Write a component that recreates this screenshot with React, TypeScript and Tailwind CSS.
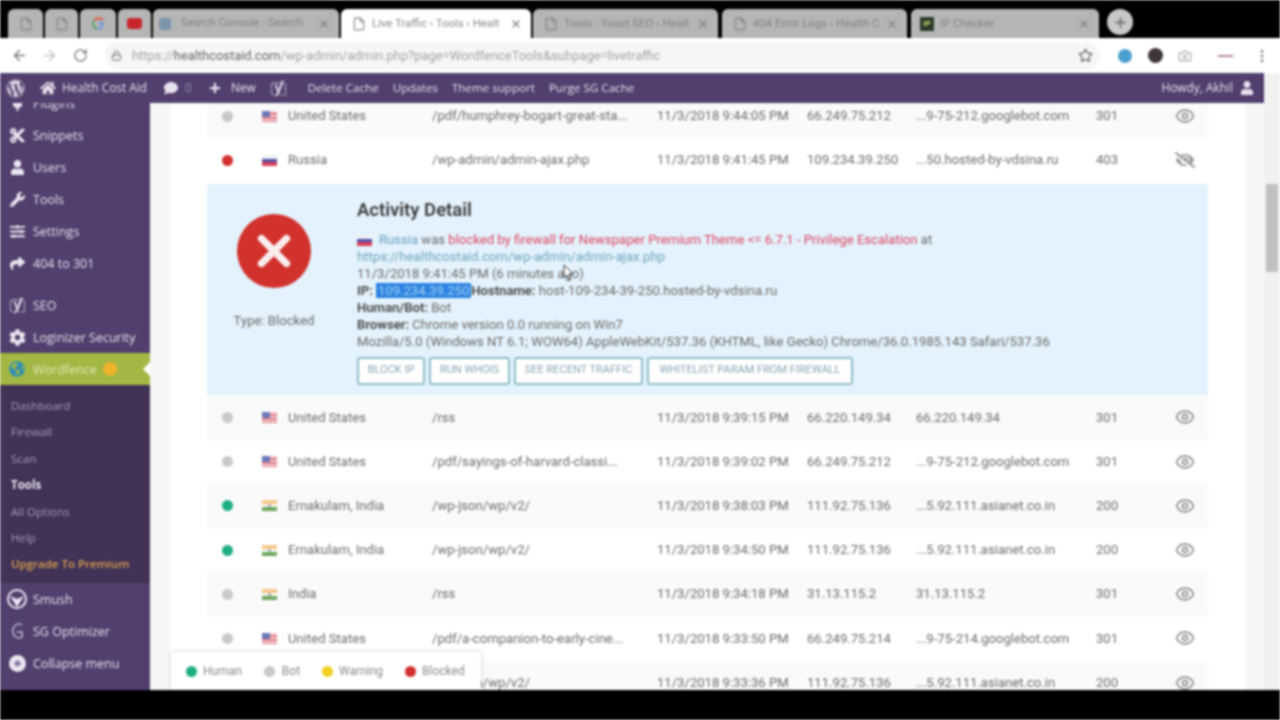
import { Lock, ArrowLeft, ArrowRight, RotateCw, Star, Camera, Eye, File, X, Plus, MoreVertical } from "lucide-react";
import { FaWordpress, FaHome, FaComment, FaPlus, FaUser, FaCut, FaWrench, FaSlidersH, FaShare, FaYoast, FaCog, FaGlobeAmericas, FaEyeSlash, FaPlug } from "react-icons/fa";

function UsFlag() {
  return (
    <svg width="15" height="11" viewBox="0 0 15 11" className="shrink-0">
      <rect width="15" height="11" fill="#f3c9cf" />
      <rect y="2" width="15" height="2" fill="#e0808c" />
      <rect y="6" width="15" height="2" fill="#e0808c" />
      <rect y="10" width="15" height="1" fill="#e0808c" />
      <rect width="8" height="6" fill="#6d78b8" />
    </svg>
  );
}

function InFlag() {
  return (
    <svg width="15" height="11" viewBox="0 0 15 11" className="shrink-0">
      <rect width="15" height="4" fill="#f5c98a" />
      <rect y="4" width="15" height="3" fill="#f7f7f0" />
      <rect y="7" width="15" height="4" fill="#6fa85f" />
      <circle cx="7.5" cy="5.5" r="1.2" fill="#7b82b0" />
    </svg>
  );
}

function RuFlag() {
  return (
    <svg width="15" height="11" viewBox="0 0 15 11" className="shrink-0">
      <rect width="15" height="4" fill="#eef0f5" />
      <rect y="4" width="15" height="3" fill="#4b55a8" />
      <rect y="7" width="15" height="4" fill="#d8405a" />
    </svg>
  );
}

const rowsTop = [
  { dot: "bg-[#c9c9c9]", flag: "us", loc: "United States", url: "/pdf/humphrey-bogart-great-sta...", time: "11/3/2018 9:44:05 PM", ip: "66.249.75.212", host: "...9-75-212.googlebot.com", code: "301" },
  { dot: "bg-[#d32f2f]", flag: "ru", loc: "Russia", url: "/wp-admin/admin-ajax.php", time: "11/3/2018 9:41:45 PM", ip: "109.234.39.250", host: "...50.hosted-by-vdsina.ru", code: "403", off: true },
];

const rowsBottom = [
  { dot: "bg-[#c9c9c9]", flag: "us", loc: "United States", url: "/rss", time: "11/3/2018 9:39:15 PM", ip: "66.220.149.34", host: "66.220.149.34", code: "301" },
  { dot: "bg-[#c9c9c9]", flag: "us", loc: "United States", url: "/pdf/sayings-of-harvard-classi...", time: "11/3/2018 9:39:02 PM", ip: "66.249.75.212", host: "...9-75-212.googlebot.com", code: "301" },
  { dot: "bg-[#1fae84]", flag: "in", loc: "Ernakulam, India", url: "/wp-json/wp/v2/", time: "11/3/2018 9:38:03 PM", ip: "111.92.75.136", host: "...5.92.111.asianet.co.in", code: "200" },
  { dot: "bg-[#1fae84]", flag: "in", loc: "Ernakulam, India", url: "/wp-json/wp/v2/", time: "11/3/2018 9:34:50 PM", ip: "111.92.75.136", host: "...5.92.111.asianet.co.in", code: "200" },
  { dot: "bg-[#c9c9c9]", flag: "in", loc: "India", url: "/rss", time: "11/3/2018 9:34:18 PM", ip: "31.13.115.2", host: "31.13.115.2", code: "301" },
  { dot: "bg-[#c9c9c9]", flag: "us", loc: "United States", url: "/pdf/a-companion-to-early-cine...", time: "11/3/2018 9:33:50 PM", ip: "66.249.75.214", host: "...9-75-214.googlebot.com", code: "301" },
  { dot: "bg-[#1fae84]", flag: "in", loc: "Ernakulam, India", url: "/wp-json/wp/v2/", time: "11/3/2018 9:33:36 PM", ip: "111.92.75.136", host: "...5.92.111.asianet.co.in", code: "200" },
];

type Row = (typeof rowsTop)[number] & { off?: boolean };

function TrafficRow({ row, alt }: { row: Row; alt: boolean }) {
  return (
    <div className={`grid h-[44.2px] shrink-0 grid-cols-[55px_26px_144px_225px_150px_109px_180px_112px] items-center text-[13.1px] text-[#6d6d6d] ${alt ? "bg-[#fafafa]" : "bg-white"}`}>
      <span className={`ml-[15px] size-[11px] rounded-full ${row.dot}`} />
      {row.flag === "us" ? <UsFlag /> : row.flag === "ru" ? <RuFlag /> : <InFlag />}
      <span className="whitespace-nowrap">{row.loc}</span>
      <span className="whitespace-nowrap">{row.url}</span>
      <span className="whitespace-nowrap">{row.time}</span>
      <span>{row.ip}</span>
      <span className="whitespace-nowrap">{row.host}</span>
      <div className="flex items-center">
        <span className="w-[79px]">{row.code}</span>
        {row.off ? <FaEyeSlash size={20} className="text-[#999]" /> : <Eye size={20} className="text-[#8b8b8b]" />}
      </div>
    </div>
  );
}

function ActivityDetail() {
  return (
    <div className="mt-[2px] flex h-[211px] shrink-0 bg-[#e3f2fc] text-[13.1px] leading-[16.9px] text-[#6b6b6b]">
      <div className="flex w-[150px] flex-col items-center pt-[30px] pr-[16px]">
        <div className="flex size-[74px] items-center justify-center rounded-full bg-[#d2322d]">
          <X size={50} strokeWidth={3.5} className="text-[#fbeeee]" />
        </div>
        <span className="mt-[25px]">Type: Blocked</span>
      </div>
      <div className="flex flex-col pt-[14px]">
        <h2 className="mb-[10px] text-[18.5px] leading-[24px] font-semibold text-[#3d3d3d]">Activity Detail</h2>
        <div className="flex items-center gap-[7px]">
          <RuFlag />
          <span className="whitespace-nowrap">
            <span className="text-[#6a9fc4]">Russia</span> was <span className="text-[#e0455f]">blocked by firewall for Newspaper Premium Theme &lt;= 6.7.1 - Privilege Escalation</span> at
          </span>
        </div>
        <span className="text-[#6fa5bd]">https://healthcostaid.com/wp-admin/admin-ajax.php</span>
        <span>11/3/2018 9:41:45 PM (6 minutes ago)</span>
        <span className="whitespace-nowrap">
          <b className="font-semibold text-[#444]">IP:</b> <span className="bg-[#2a83e0] px-[2px] text-[#a9d0f5]">109.234.39.250</span>
          <b className="font-semibold text-[#444]">Hostname:</b> host-109-234-39-250.hosted-by-vdsina.ru
        </span>
        <span>
          <b className="font-semibold text-[#444]">Human/Bot:</b> Bot
        </span>
        <span>
          <b className="font-semibold text-[#444]">Browser:</b> Chrome version 0.0 running on Win7
        </span>
        <span className="whitespace-nowrap">Mozilla/5.0 (Windows NT 6.1; WOW64) AppleWebKit/537.36 (KHTML, like Gecko) Chrome/36.0.1985.143 Safari/537.36</span>
        <div className="mt-[6px] flex gap-[4px]">
          {[
            ["BLOCK IP", "w-[68px]"],
            ["RUN WHOIS", "w-[81px]"],
            ["SEE RECENT TRAFFIC", "w-[129px]"],
            ["WHITELIST PARAM FROM FIREWALL", "w-[206px]"],
          ].map(([label, w]) => (
            <button key={label} className={`h-[28px] rounded-[3px] border-2 border-[#8fbcc6] bg-white text-[11px] whitespace-nowrap text-[#8aa5b0] ${w}`}>
              {label}
            </button>
          ))}
        </div>
      </div>
    </div>
  );
}

function NavItem({ icon, label, className = "" }: { icon: React.ReactNode; label: string; className?: string }) {
  return (
    <div className={`flex h-[32px] shrink-0 items-center text-[12.5px] text-[#e6e1ee] ${className}`}>
      <span className="flex w-[33px] justify-center pl-[1px] text-[#ebe7f2]">{icon}</span>
      <span className="mt-[2px] whitespace-nowrap">{label}</span>
    </div>
  );
}

function Sidebar() {
  return (
    <aside className="relative flex w-[150px] shrink-0 flex-col overflow-hidden bg-[#523f6d]">
      <NavItem icon={<FaPlug size={15} />} label="Plugins" className="-mt-[16px]" />
      <NavItem icon={<FaCut size={17} />} label="Snippets" />
      <NavItem icon={<FaUser size={15} />} label="Users" />
      <NavItem icon={<FaWrench size={15} />} label="Tools" />
      <NavItem icon={<FaSlidersH size={15} />} label="Settings" />
      <NavItem icon={<FaShare size={15} />} label="404 to 301" className="mb-[10px]" />
      <NavItem icon={<FaYoast size={17} />} label="SEO" />
      <NavItem icon={<FaCog size={17} />} label="Loginizer Security" />
      <div className="relative flex h-[32px] shrink-0 items-center bg-[#a3b745] text-[12.5px] text-[#dfe8b5]">
        <span className="flex w-[33px] justify-center pl-[1px] text-[#2e8fb0]">
          <FaGlobeAmericas size={16} />
        </span>
        <span className="mt-[2px]">Wordfence</span>
        <span className="ml-[6px] size-[14px] rounded-full bg-[#efb22c]" />
        <span className="absolute right-0 border-y-[7px] border-r-[7px] border-y-transparent border-r-white" />
      </div>
      <div className="flex h-[198px] shrink-0 flex-col bg-[#413256] pt-[8px] pl-[11px] text-[11.5px] leading-[26.4px] text-[#a59db5]">
        <span>Dashboard</span>
        <span>Firewall</span>
        <span>Scan</span>
        <span className="font-bold text-[#e8e4ee]">Tools</span>
        <span>All Options</span>
        <span>Help</span>
        <span className="font-semibold text-[#d9a04e]">Upgrade To Premium</span>
      </div>
      <NavItem
        label="Smush"
        icon={
          <svg width="20" height="20" viewBox="0 0 20 20">
            <circle cx="10" cy="10" r="9" fill="none" stroke="#ebe7f2" strokeWidth="2" />
            <path d="M3 7l7 11 7-11-7 3z" fill="#ebe7f2" />
          </svg>
        }
      />
      <NavItem
        label="SG Optimizer"
        icon={
          <svg width="16" height="20" viewBox="0 0 16 20" fill="none" stroke="#a79dba" strokeWidth="2">
            <path d="M13 4a6 7 0 1 0 0 12v-5H8" />
          </svg>
        }
      />
      <NavItem
        label="Collapse menu"
        icon={
          <svg width="17" height="17" viewBox="0 0 17 17">
            <circle cx="8.5" cy="8.5" r="8.5" fill="#ebe7f2" />
            <circle cx="8.5" cy="8.5" r="3" fill="#8d7ba8" />
          </svg>
        }
      />
    </aside>
  );
}

function Tab({ label, active, className = "" }: { label: string; active?: boolean; className?: string }) {
  return (
    <div className={`flex h-[29px] items-center gap-[6px] rounded-t-[6px] pr-[9px] pl-[11px] text-[11.4px] ${active ? "bg-white text-[#8b8b8b]" : "bg-[#b5b5b5] text-[#858585]"} ${className}`}>
      <File size={14} className="shrink-0" />
      <span className="flex-1 whitespace-nowrap">{label}</span>
      <X size={12} strokeWidth={3} className="shrink-0" />
    </div>
  );
}

function PinnedTab({ children, className = "" }: { children: React.ReactNode; className?: string }) {
  return <div className={`flex h-[29px] items-center justify-center rounded-t-[6px] bg-[#b5b5b5] text-[#858585] ${className}`}>{children}</div>;
}

function BrowserChrome() {
  return (
    <>
      <div className="flex h-[38px] shrink-0 items-end bg-black pl-[8px]">
        <PinnedTab className="w-[35px]"><File size={14} /></PinnedTab>
        <PinnedTab className="ml-[2px] w-[33px]"><File size={14} /></PinnedTab>
        <PinnedTab className="ml-[2px] w-[36px]">
          <svg width="14" height="14" viewBox="0 0 13 13" fill="none" strokeWidth="2.5">
            <path d="M11 3a5 5 0 0 0-8 0" stroke="#d9705f" />
            <path d="M3 3a5 5 0 0 0 3 8" stroke="#6fa87a" />
            <path d="M6 11a5 5 0 0 0 5-5H7" stroke="#7c9ed8" />
          </svg>
        </PinnedTab>
        <PinnedTab className="ml-[2px] w-[33px]">
          <span className="h-[11px] w-[15px] rounded-[3px] bg-[#c8262c]" />
        </PinnedTab>
        <div className="ml-[2px] flex h-[29px] w-[186px] items-center gap-[10px] rounded-t-[6px] bg-[#b5b5b5] pr-[9px] pl-[6px] text-[11.3px] text-[#858585]">
          <span className="size-[12px] shrink-0 rounded-[3px] bg-[#7d93a8]" />
          <span className="flex-1 whitespace-nowrap">Search Console - Search</span>
          <X size={12} strokeWidth={3} className="shrink-0" />
        </div>
        <Tab label="Live Traffic ‹ Tools ‹ Healt" active className="ml-[2px] w-[190px]" />
        <Tab label="Tools - Yoast SEO ‹ Healt" className="ml-[2px] w-[185px]" />
        <Tab label="404 Error Logs ‹ Health C" className="ml-[4px] w-[185px]" />
        <div className="ml-[4px] flex h-[29px] w-[188px] items-center gap-[6px] rounded-t-[6px] bg-[#b5b5b5] pr-[9px] pl-[9px] text-[11.4px] text-[#858585]">
          <span className="flex size-[14px] shrink-0 items-center justify-center bg-[#2b3a2a] text-[8px] font-bold text-[#cbd96a]">IP</span>
          <span className="flex-1 whitespace-nowrap">IP Checker</span>
          <X size={12} strokeWidth={3} className="shrink-0" />
        </div>
        <div className="mb-[3px] ml-[8px] flex size-[26px] items-center justify-center rounded-full bg-[#c9c9c9] text-[#777]">
          <Plus size={15} strokeWidth={3} />
        </div>
      </div>
      <div className="flex h-[35px] shrink-0 items-center bg-white text-[#777]">
        <ArrowLeft size={17} className="ml-[11px]" />
        <ArrowRight size={17} className="ml-[13px] text-[#c4c4c4]" />
        <RotateCw size={15} className="ml-[15px]" />
        <div className="ml-[17px] flex h-[28px] w-[995px] items-center rounded-full bg-[#f6f6f6] pl-[6px] text-[12.9px] text-[#a5a5a5]">
          <Lock size={11} className="mr-[10px] text-[#666]" />
          <span className="whitespace-nowrap">
            https://<span className="text-[#666]">healthcostaid.com</span>/wp-admin/admin.php?page=WordfenceTools&amp;subpage=livetraffic
          </span>
          <Star size={15} className="mr-[7px] ml-auto shrink-0 text-[#666]" />
        </div>
        <span className="ml-[18px] size-[14px] rounded-full bg-[#4a9fd0]" />
        <span className="ml-[16px] size-[15px] rounded-full bg-[#3f3436]" />
        <Camera size={14} className="ml-[15px] text-[#a5a5a5]" />
        <span className="ml-[26px] h-[2px] w-[15px] bg-[#b08a94]" />
        <MoreVertical size={16} className="ml-[21px]" />
      </div>
    </>
  );
}

function AdminBar() {
  return (
    <div className="flex h-[30px] w-[1264px] shrink-0 items-center bg-[#523f6d] text-[11.9px] text-[#e6e1ee]">
      <FaWordpress size={19} className="ml-[6px]" />
      <FaHome size={16} className="ml-[15px]" />
      <span className="ml-[6px]">Health Cost Aid</span>
      <FaComment size={14} className="ml-[17px]" />
      <span className="ml-[7px] text-[#9c90ae]">0</span>
      <FaPlus size={12} className="ml-[17px]" />
      <span className="ml-[10px]">New</span>
      <FaYoast size={17} className="ml-[14px]" />
      <span className="ml-[21px] text-[11.6px]">Delete Cache</span>
      <span className="ml-[14px] text-[11.6px]">Updates</span>
      <span className="ml-[14px] text-[11.6px]">Theme support</span>
      <span className="ml-[14px] text-[11.6px]">Purge SG Cache</span>
      <span className="ml-auto">Howdy, Akhil</span>
      <FaUser size={14} className="mr-[10px] ml-[7px]" />
    </div>
  );
}

export default function App() {
  return (
    <div className="relative flex h-[720px] w-[1280px] flex-col overflow-hidden bg-black font-['Roboto',sans-serif] blur-[0.8px]">
      <BrowserChrome />
      <div className="flex h-[617px] shrink-0 flex-col bg-white font-['Open_Sans',sans-serif]">
        <div className="flex shrink-0">
          <AdminBar />
          <div className="flex-1 bg-[#f1f1f1]" />
        </div>
        <div className="flex min-h-0 flex-1">
          <Sidebar />
          <main className="relative flex min-w-0 flex-1 overflow-hidden bg-[#f6f6f6] font-['Roboto',sans-serif]">
            <div className="ml-[20px] flex w-[1075px] shrink-0 flex-col overflow-hidden bg-white pl-[37px]">
              <div className="-mt-[9px] flex w-[1001px] flex-col">
                {rowsTop.map((r, i) => (
                  <TrafficRow key={r.time} row={r} alt={i % 2 === 0} />
                ))}
                <ActivityDetail />
                {rowsBottom.map((r, i) => (
                  <TrafficRow key={r.time} row={r} alt={i % 2 === 0} />
                ))}
              </div>
            </div>
            <div className="ml-auto w-[16px] shrink-0 bg-[#f1f1f1] pt-[81px] pl-[2px]">
              <div className="h-[88px] w-[12px] bg-[#c1c1c1]" />
            </div>
            {/* legend */}
            <div className="absolute bottom-0 left-[21px] flex h-[38px] w-[310px] items-center bg-white pl-[15px] text-[12px] text-[#8a8a8a] shadow-[0_0_4px_rgba(0,0,0,0.2)]">
              <span className="size-[11px] rounded-full bg-[#1fae84]" />
              <span className="ml-[6px]">Human</span>
              <span className="ml-[22px] size-[11px] rounded-full bg-[#c9c9c9]" />
              <span className="ml-[7px]">Bot</span>
              <span className="ml-[22px] size-[11px] rounded-full bg-[#f0d020]" />
              <span className="ml-[6px]">Warning</span>
              <span className="ml-[22px] size-[11px] rounded-full bg-[#d32f2f]" />
              <span className="ml-[6px]">Blocked</span>
            </div>
            {/* mouse pointer */}
            <svg width="12" height="17" viewBox="0 0 12 17" className="absolute top-[161px] left-[413px]">
              <path d="M1 1v13l3-3 2 5 2-1-2-5h4z" fill="#fff" stroke="#333" strokeWidth="1" />
            </svg>
          </main>
        </div>
      </div>
    </div>
  );
}
